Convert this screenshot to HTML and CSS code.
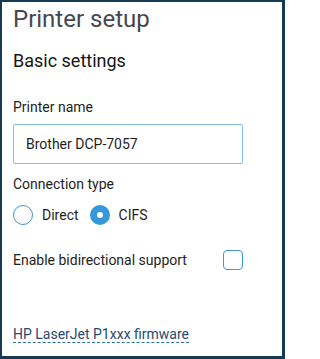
FILE: index.html
```html
<!DOCTYPE html>
<html>
<head>
<meta charset="utf-8">
<link rel="stylesheet" href="styles.css">
</head>
<body>
<div class="panel">
  <h1 class="title">Printer setup</h1>
  <h2 class="section">Basic settings</h2>
  <div class="field-label name-label">Printer name</div>
  <div class="text-input">Brother DCP-7057</div>
  <div class="field-label conn-label">Connection type</div>
  <div class="radio-row">
    <span class="radio"></span><span class="radio-text">Direct</span>
    <span class="radio checked"></span><span class="radio-text">CIFS</span>
  </div>
  <div class="check-row">
    <span class="check-text">Enable bidirectional support</span>
    <span class="checkbox"></span>
  </div>
  <a class="link">HP LaserJet P1xxx firmware</a>
</div>
</body>
</html>
```
FILE: styles.css
```css
html, body {
  margin: 0;
  padding: 0;
  background: #ffffff;
}
.panel {
  box-sizing: border-box;
  width: 285px;
  height: 359px;
  border-style: solid;
  border-color: #163a52;
  border-width: 2px 3px 3px 2px;
  padding: 0 0 0 11px;
  font-family: Roboto, "Liberation Sans", sans-serif;
  color: #1e1e1e;
  overflow: hidden;
}
.title {
  margin: 3px 0 0 0;
  font-size: 24px;
  line-height: 28px;
  font-weight: 400;
  color: #47464f;
}
.section {
  margin: 17px 0 0 0;
  font-size: 18px;
  line-height: 21px;
  font-weight: 400;
  color: #151515;
}
.field-label {
  font-size: 14px;
  line-height: 17px;
}
.name-label {
  margin-top: 28px;
}
.text-input {
  box-sizing: border-box;
  margin-top: 8px;
  width: 230px;
  height: 40px;
  border: 1px solid #86c0ea;
  border-radius: 2px;
  padding: 0 12px;
  display: flex;
  align-items: center;
  font-size: 14px;
  color: #1e1e1e;
}
.conn-label {
  margin-top: 12px;
}
.radio-row {
  margin-top: 12px;
  height: 20px;
  display: flex;
  align-items: center;
  font-size: 14px;
}
.radio {
  box-sizing: border-box;
  width: 20px;
  height: 20px;
  border-radius: 50%;
  border: 1px solid #3a97d8;
  margin-right: 9px;
  flex: none;
}
.radio.checked {
  border: 7px solid #3498db;
  background: #ffffff;
}
.radio-text {
  margin-right: 11px;
}
.check-row {
  margin-top: 25px;
  width: 230px;
  height: 20px;
  display: flex;
  align-items: center;
  justify-content: space-between;
  font-size: 14px;
}
.checkbox {
  box-sizing: border-box;
  width: 20px;
  height: 20px;
  border: 1px solid #3b9ade;
  border-radius: 4px;
  flex: none;
}
.link {
  display: inline-block;
  margin-top: 56px;
  font-size: 14px;
  line-height: 16px;
  color: #294a70;
  border-bottom: 1px dashed #2f6fa8;
}
```
